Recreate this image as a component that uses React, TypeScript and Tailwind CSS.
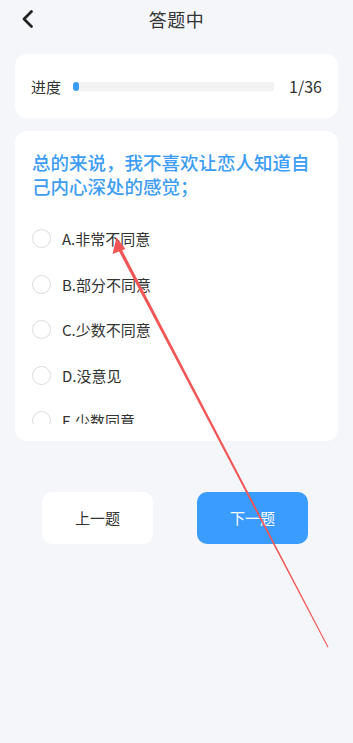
import React from "react";

const options = ["A.非常不同意", "B.部分不同意", "C.少数不同意", "D.没意见", "E.少数同意"];

export default function App() {
  return (
    <div
      className="relative w-[353px] h-[743px] overflow-hidden bg-[#f5f6fa] text-[#333333]"
      style={{ fontFamily: '"Noto Sans CJK SC", "Noto Sans", sans-serif' }}
    >
      {/* Header */}
      <div className="relative h-[38px] flex items-center justify-center">
        <svg className="absolute left-[20px] top-[9px]" width="16" height="20" viewBox="0 0 16 20">
          <path d="M11.5 2.5 L4 10 L11.5 17.5" fill="none" stroke="#222" strokeWidth="2.8" strokeLinecap="round" strokeLinejoin="round" />
        </svg>
        <span className="text-[18px] leading-none text-[#333] tracking-[0.5px]">答题中</span>
      </div>

      {/* Progress card */}
      <div className="mx-[15px] mt-[16px] h-[64px] bg-white rounded-[12px] flex items-center pl-[16px] pr-[16px]">
        <span className="text-[15px] leading-none text-[#333]">进度</span>
        <div className="ml-[12px] w-[201px] h-[9px] bg-[#f2f2f2] rounded-[2px] overflow-hidden">
          <div className="h-full w-[6px] bg-[#3a9cf5] rounded-[3px]" />
        </div>
        <span className="ml-auto text-[16px] leading-none text-[#333]">1/36</span>
      </div>

      {/* Question card */}
      <div className="mx-[15px] mt-[13px] bg-white rounded-[12px] pt-[19px] pb-[17px]">
        <div className="px-[17px] text-[18.5px] leading-[24px] text-[#3d9df2] font-medium">
          总的来说，我不喜欢让恋人知道自己内心深处的感觉；
        </div>
        <div className="mt-[18px] h-[208px] overflow-hidden">
          {options.map((o) => (
            <div key={o} className="h-[45.5px] flex items-center pl-[17px]">
              <div className="w-[19px] h-[19px] rounded-full border border-[#dcdcdc] bg-white" />
              <span className="ml-[11px] text-[15px] leading-none text-[#333]">{o}</span>
            </div>
          ))}
        </div>
      </div>

      {/* Buttons */}
      <div className="mt-[51px] ml-[42px] flex gap-[44px]">
        <div className="w-[111px] h-[52px] bg-white rounded-[10px] flex items-center justify-center text-[15px] text-[#333]">
          上一题
        </div>
        <div className="w-[111px] h-[52px] bg-[#3a9cff] rounded-[10px] flex items-center justify-center text-[15px] text-white">
          下一题
        </div>
      </div>

      {/* Annotation arrow overlay */}
      <svg className="absolute left-0 top-0 pointer-events-none" width="353" height="743" viewBox="0 0 353 743">
        <polygon points="116.2,246 119.2,244.6 328.5,647 327.6,647.4" fill="#f25555" />
        <polygon points="116.5,237.5 112.5,254 125.5,249" fill="#f25555" />
      </svg>
    </div>
  );
}
